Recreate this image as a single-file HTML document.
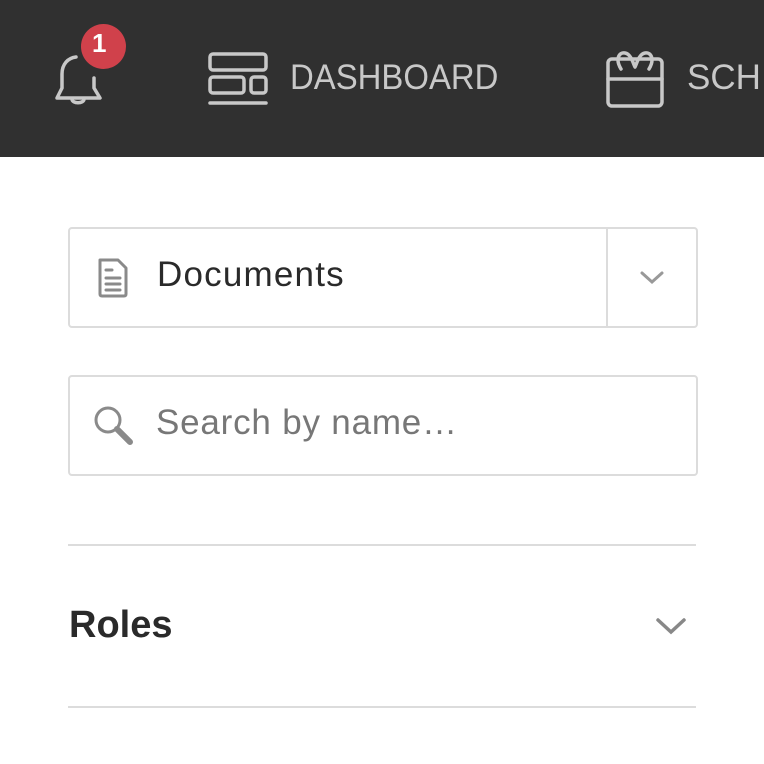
<!DOCTYPE html>
<html><head><style>
html,body{margin:0;width:764px;height:764px;overflow:hidden}
body{background:#fff;font-family:"Liberation Sans",sans-serif;position:relative}
.hdr{position:absolute;left:0;top:0;width:764px;height:157px;background:#303030;overflow:hidden}
.t{position:absolute;white-space:nowrap}
.box{position:absolute;left:68px;width:626px;height:97px;border:2px solid #dcdcdc;border-radius:4px;box-sizing:content-box}
</style></head><body>
<div class="hdr">
<svg style="position:absolute;left:50px;top:48px" width="60" height="62" viewBox="0 0 60 62" fill="none" stroke="#c8c8c8" stroke-width="3.5" stroke-linecap="round" stroke-linejoin="round">
<path d="M12 40 V26 C12 16 18 10 26 9 M44 30 V40 L50 50 H7 L12 40"/><path d="M22 51 C22 56 34 56 34 51"/></svg>
<div style="position:absolute;left:81px;top:24px;width:45px;height:45px;border-radius:50%;background:#d0414b"></div>
<div class="t" style="left:92px;top:28px;color:#fff;font-weight:bold;font-size:26px">1</div>
<svg style="position:absolute;left:207px;top:51px" width="62" height="56" viewBox="0 0 62 56" fill="none" stroke="#c8c8c8" stroke-width="3.5" stroke-linecap="round">
<rect x="3" y="3" width="56" height="16" rx="3"/><rect x="3" y="26" width="34" height="16" rx="3"/><rect x="44" y="26" width="15" height="16" rx="3"/><path d="M3 52 H59"/></svg>
<div class="t" style="left:290px;top:58px;color:#c8c8c8;font-size:35px;transform:scaleX(0.94);transform-origin:left">DASHBOARD</div>
<svg style="position:absolute;left:605px;top:49px" width="60" height="60" viewBox="0 0 60 60" fill="none" stroke="#c8c8c8" stroke-width="3.5" stroke-linecap="round" stroke-linejoin="round">
<rect x="3" y="10" width="54" height="47" rx="4"/><path d="M3 30 H57"/><path d="M16 20 C10 10 14 3 20 4 C26 5 28 14 30 18 C32 14 34 5 40 4 C46 3 50 10 44 20"/></svg>
<div class="t" style="left:687px;top:58px;color:#c8c8c8;font-size:35px">SCH</div>
</div>
<div class="box" style="top:227px"></div>
<div style="position:absolute;left:606px;top:228px;width:2px;height:99px;background:#dcdcdc"></div>
<svg style="position:absolute;left:96px;top:256px" width="34" height="44" viewBox="0 0 34 44" fill="none" stroke="#8a8a8a" stroke-width="3" stroke-linejoin="round" stroke-linecap="round">
<path d="M4 4 H22 L30 12 V38 Q30 40 28 40 H6 Q4 40 4 38 Z"/><path d="M10 14 H16 M10 22 H24 M10 28 H24 M10 34 H24"/></svg>
<div class="t" style="left:157px;top:255px;color:#2a2a2a;font-size:35px;letter-spacing:1.2px">Documents</div>
<svg style="position:absolute;left:638px;top:268px" width="28" height="18" viewBox="0 0 28 18" fill="none" stroke="#999" stroke-width="3" stroke-linecap="round"><path d="M4 5 L14 14 L24 5"/></svg>
<div class="box" style="top:375px"></div>
<svg style="position:absolute;left:92px;top:404px" width="44" height="44" viewBox="0 0 44 44" fill="none" stroke="#8a8a8a" stroke-width="3" stroke-linecap="round"><circle cx="16" cy="16" r="12"/><path d="M25 25 L38 38" stroke-width="6"/></svg>
<div class="t" style="left:156px;top:403px;color:#777;font-size:35px;letter-spacing:0.8px">Search by name…</div>
<div style="position:absolute;left:68px;top:544px;width:628px;height:2px;background:#dcdcdc"></div>
<div class="t" style="left:69px;top:604px;color:#2a2a2a;font-size:38px;font-weight:bold">Roles</div>
<svg style="position:absolute;left:654px;top:615px" width="34" height="22" viewBox="0 0 34 22" fill="none" stroke="#888" stroke-width="3.5" stroke-linecap="round"><path d="M4 5 L17 17 L30 5"/></svg>
<div style="position:absolute;left:68px;top:706px;width:628px;height:2px;background:#dcdcdc"></div>
</body></html>
